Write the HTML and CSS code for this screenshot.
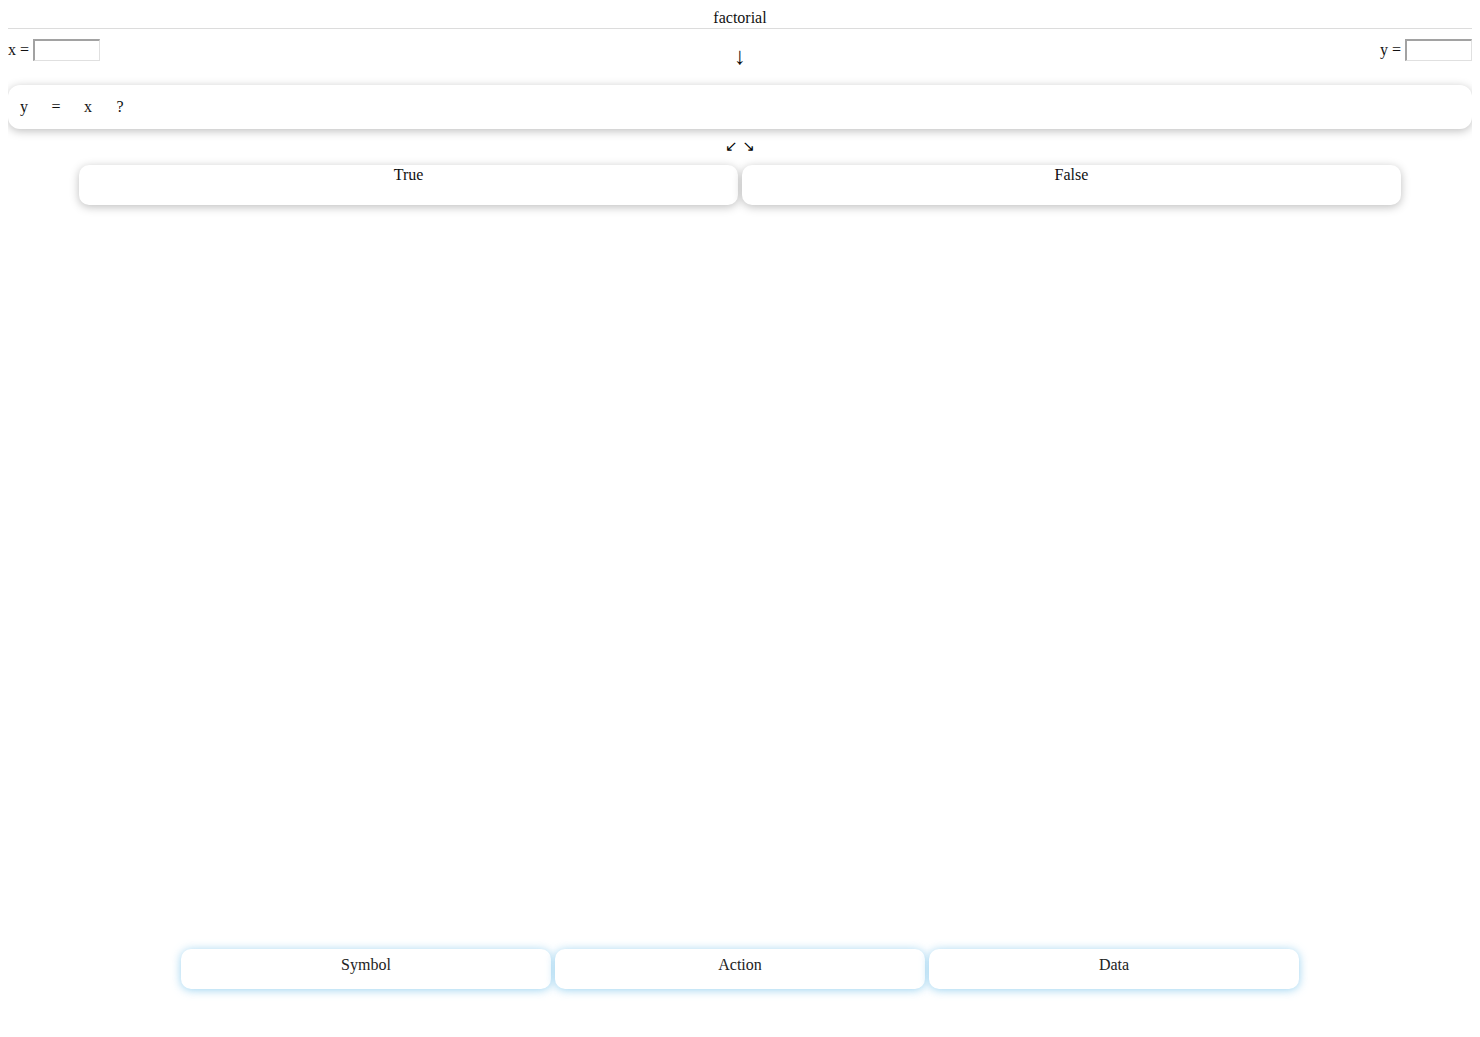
FILE: index.html
```html
<!DOCTYPE html>
<html>
<head>
<meta charset="utf-8">
<title>factorial</title>
<link rel="stylesheet" href="styles.css">
</head>
<body>
<div class="title">factorial</div>
<div class="io-row">
  <label class="io">x = <input class="io-input" type="text"></label>
  <div class="down-arrow">↓</div>
  <label class="io">y = <input class="io-input" type="text"></label>
</div>
<div class="condition">
  <span class="tok">y</span><span class="tok">=</span><span class="tok">x</span><span class="tok">?</span>
</div>
<div class="split-arrows">↙ ↘</div>
<div class="branches">
  <div class="branch">True</div>
  <div class="branch">False</div>
</div>
<div class="palette">
  <div class="pal-item">Symbol</div>
  <div class="pal-item">Action</div>
  <div class="pal-item">Data</div>
</div>
</body>
</html>
```

FILE: styles.css
```css
html, body {
  margin: 0;
  padding: 0;
  background: #fff;
}
body {
  margin: 8px;
  min-height: calc(100vh - 16px);
  display: flex;
  flex-direction: column;
  font-family: "Liberation Serif", "Times New Roman", serif;
  font-size: 16px;
  line-height: 18px;
  color: #111;
}
.title {
  text-align: center;
  padding-top: 1px;
  padding-bottom: 1px;
  border-bottom: 1px solid #dcdcdc;
}
.io-row {
  display: flex;
  justify-content: space-between;
  align-items: flex-start;
  margin-top: 10px;
  height: 27px;
}
.io {
  display: flex;
  align-items: center;
  gap: 4px;
  height: 22px;
}
.io-input {
  box-sizing: border-box;
  width: 67px;
  height: 22px;
  margin: 0;
  padding: 0;
  border-style: solid;
  border-width: 2px 1px 1px 2px;
  border-color: #a2a2a2 #e0e0e0 #e0e0e0 #a2a2a2;
  background: #fff;
  font: inherit;
}
.down-arrow {
  margin-top: 4px;
  font-size: 24px;
  line-height: 26px;
}
.condition {
  margin-top: 19px;
  height: 44px;
  box-sizing: border-box;
  padding: 13px 0;
  display: flex;
  border-radius: 12px;
  background: #fff;
  box-shadow: 0 2px 10px rgba(0, 0, 0, 0.26);
}
.tok {
  width: 32px;
  text-align: center;
}
.split-arrows {
  margin-top: 8px;
  text-align: center;
  font-family: "DejaVu Sans", sans-serif;
  font-size: 15px;
  line-height: 18px;
  color: #000;
}
.branches {
  margin-top: 10px;
  display: flex;
  justify-content: center;
  gap: 4px;
}
.branch {
  width: 45%;
  height: 40px;
  box-sizing: border-box;
  padding-top: 1px;
  text-align: center;
  border-radius: 10px;
  background: #fff;
  box-shadow: 0 2px 10px rgba(0, 0, 0, 0.26);
}
.palette {
  margin-top: auto;
  margin-bottom: 40px;
  display: flex;
  justify-content: center;
  gap: 4px;
}
.pal-item {
  width: 370px;
  height: 40px;
  box-sizing: border-box;
  padding-top: 7px;
  text-align: center;
  color: #222;
  border-radius: 10px;
  background: #fff;
  box-shadow: 0 1px 10px rgba(120, 195, 235, 0.75);
}
```
